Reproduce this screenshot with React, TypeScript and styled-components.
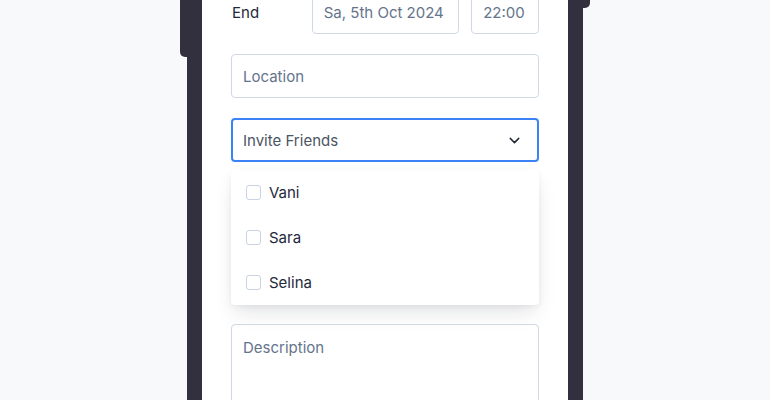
import { FC } from 'react';
import styled, { createGlobalStyle } from 'styled-components';
import { ChevronDown } from 'lucide-react';

const GlobalStyle = createGlobalStyle`
  html, body {
    margin: 0;
    padding: 0;
    background: #f8f9fb;
    font-family: Inter, "Noto Sans", sans-serif;
    overflow: hidden;
  }
`;

const friends = ['Vani', 'Sara', 'Selina'];

const App: FC = () => {
  return (
    <>
      <GlobalStyle />
      <StageStyled>
        <PhoneStyled>
          <SideButtonStyled $side="left" $height={77} />
          <SideButtonStyled $side="right" $height={28} />
          <ScreenStyled>
            <RowStyled>
              <LabelStyled>End</LabelStyled>
              <FieldStyled $width={148}>Sa, 5th Oct 2024</FieldStyled>
              <FieldStyled $width={68}>22:00</FieldStyled>
            </RowStyled>

            <FieldStyled $spaced>Location</FieldStyled>

            <SelectStyled>
              <span>Invite Friends</span>
              <ChevronDown size={17} strokeWidth={2} color="#1f2937" />
            </SelectStyled>

            <MenuStyled>
              {friends.map((name) => (
                <MenuItemStyled key={name}>
                  <CheckboxStyled />
                  <span>{name}</span>
                </MenuItemStyled>
              ))}
            </MenuStyled>

            <TextAreaStyled>Description</TextAreaStyled>
          </ScreenStyled>
        </PhoneStyled>
      </StageStyled>
    </>
  );
};

const StageStyled = styled.div`
  display: flex;
  justify-content: center;
  height: 400px;
  overflow: hidden;
`;

const PhoneStyled = styled.div`
  position: relative;
  width: 366px;
  height: 420px;
  margin-top: -20px;
  border: 15px solid #32303f;
  border-top: none;
  border-bottom: none;
`;

const SideButtonStyled = styled.div<{ $side: 'left' | 'right'; $height: number }>`
  position: absolute;
  top: 0;
  ${({ $side }) => ($side === 'left' ? 'left: -22px;' : 'right: -22px;')}
  width: 8px;
  height: ${({ $height }) => $height}px;
  background: #32303f;
  border-radius: ${({ $side }) => ($side === 'left' ? '0 0 0 5px' : '0 0 5px 0')};
`;

const ScreenStyled = styled.div`
  height: 100%;
  background: #ffffff;
  padding: 10px 29px 0;
  box-sizing: border-box;
  display: flex;
  flex-direction: column;
  overflow: hidden;

  & > * {
    flex-shrink: 0;
  }
`;

const RowStyled = styled.div`
  display: flex;
  align-items: center;
  gap: 12px;
  margin-bottom: 20px;
`;

const LabelStyled = styled.div`
  width: 68px;
  padding-left: 1px;
  font-size: 15px;
  color: #1e293b;
`;

const FieldStyled = styled.div<{ $width?: number; $spaced?: boolean }>`
  box-sizing: border-box;
  ${({ $width }) => ($width ? `width: ${$width}px;` : 'width: 100%;')}
  height: 44px;
  display: flex;
  align-items: center;
  padding: 0 11px;
  border: 1px solid #cfd8e3;
  border-radius: 4px;
  font-size: 15px;
  color: #64748b;
  margin-bottom: ${({ $spaced }) => ($spaced ? '20px' : '0')};
`;

const SelectStyled = styled.div`
  box-sizing: border-box;
  height: 44px;
  display: flex;
  align-items: center;
  justify-content: space-between;
  padding: 0 14px 0 10px;
  border: 2px solid #3b82f6;
  border-radius: 4px;
  font-size: 15px;
  color: #4b5563;
`;

const MenuStyled = styled.div`
  margin-top: 8px;
  margin-bottom: 19px;
  background: #ffffff;
  border-radius: 4px;
  box-shadow: 0 10px 20px -4px rgba(15, 23, 42, 0.13), 0 2px 6px rgba(15, 23, 42, 0.05);
  display: flex;
  flex-direction: column;
`;

const MenuItemStyled = styled.div`
  height: 45px;
  display: flex;
  align-items: center;
  gap: 8px;
  padding-left: 15px;
  font-size: 15px;
  color: #1e293b;
`;

const CheckboxStyled = styled.div`
  box-sizing: border-box;
  width: 15px;
  height: 15px;
  border: 1.5px solid #c9d3e1;
  border-radius: 3px;
`;

const TextAreaStyled = styled.div`
  box-sizing: border-box;
  height: 120px;
  padding: 13px 11px;
  border: 1px solid #cfd8e3;
  border-radius: 4px;
  font-size: 15px;
  color: #64748b;
`;

export default App;
